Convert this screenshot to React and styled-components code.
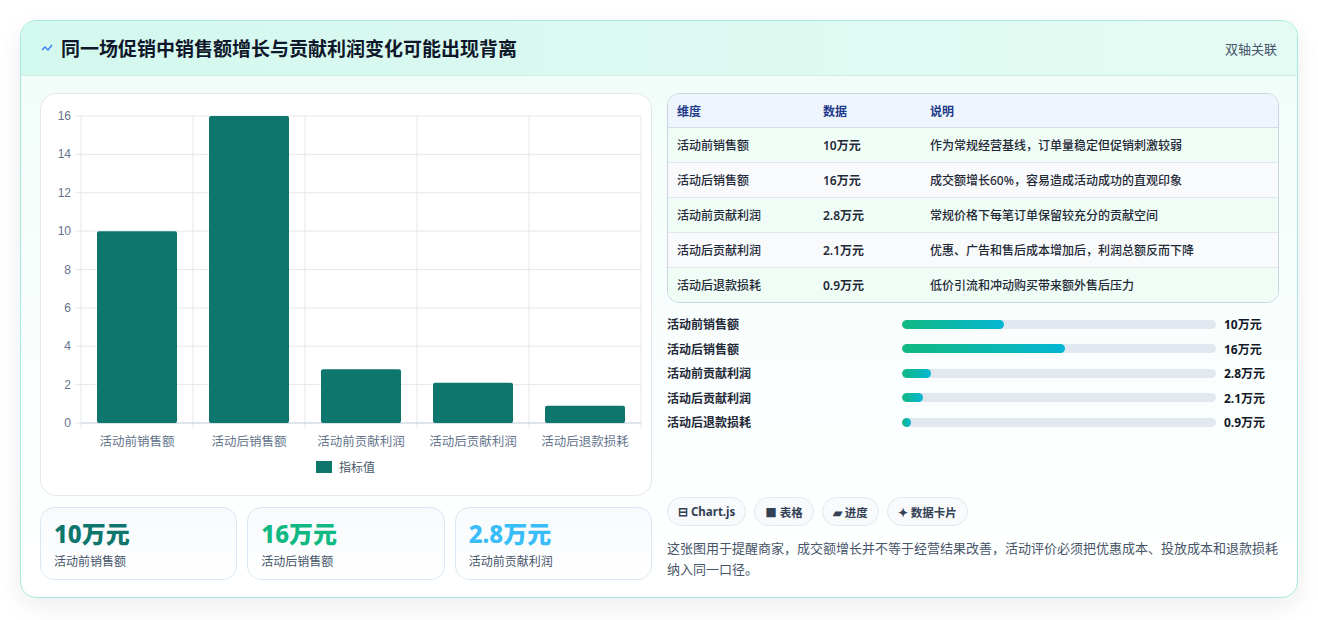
import React from "react";
import styled, { createGlobalStyle } from "styled-components";

const G = createGlobalStyle`
  body{margin:0;background:#fff;font-family:"Noto Sans","Noto Sans CJK SC",sans-serif;}
`;
const Page = styled.div`padding:20px 20px 22px 20px;`;
const Card = styled.div`
  border:1px solid #a7e8e0;border-radius:16px;overflow:hidden;
  background:linear-gradient(180deg,#f0fdf8 0%,#fafefe 60%,#fff 100%);
  box-shadow:0 8px 24px rgba(15,23,42,0.08);
`;
const Header = styled.div`
  height:55px;display:flex;align-items:center;justify-content:space-between;padding:0 20px 0 20px;
  background:linear-gradient(90deg,#d3f8ee,#e4fbf4);border-bottom:1px solid #cdeee6;box-sizing:border-box;
`;
const Title = styled.h1`margin:0;font-size:19px;font-weight:700;color:#0f172a;display:flex;align-items:center;gap:8px;`;
const Tag = styled.span`font-size:13px;color:#475569;`;
const Body = styled.div`display:grid;grid-template-columns:612px 612px;gap:15px;padding:17px 19px 17px 19px;`;
const Col = styled.div`display:flex;flex-direction:column;`;
const ChartBox = styled.div`background:#fff;border:1px solid #e2e8f0;border-radius:16px;height:403px;box-sizing:border-box;`;
const Stats = styled.div`display:grid;grid-template-columns:repeat(3,1fr);gap:10px;margin-top:11px;`;
const Stat = styled.div`height:73px;box-sizing:border-box;border:1px solid #dbe7f3;border-radius:14px;padding:10px 13px;
  background:linear-gradient(180deg,#f7fafd,#fff);`;
const StatV = styled.div`font-size:24px;font-weight:800;color:${p=>p.c};line-height:32px;`;
const StatL = styled.div`font-size:12px;color:#475569;margin-top:2px;`;
const Table = styled.table`width:100%;border-collapse:separate;border-spacing:0;border:1px solid #cbd5e1;border-radius:12px;overflow:hidden;font-size:12px;`;
const Th = styled.th`text-align:left;font-weight:700;color:#1e3a8a;background:#eef5fd;height:33px;padding:0 9px;border-bottom:1px solid #d5dde8;`;
const Td = styled.td`height:34px;padding:0 9px;color:#1f2937;font-weight:${p=>p.b?600:500};border-top:${p=>p.first?"none":"1px solid #e2e8f0"};background:${p=>p.alt?"#f8fafc":"#f0fdf6"};`;
const Prog = styled.div`display:flex;flex-direction:column;gap:8.5px;margin-top:12px;`;
const PRow = styled.div`display:grid;grid-template-columns:227px 314px 1fr;align-items:center;gap:8px;height:16px;font-size:12px;`;
const PLabel = styled.span`color:#1f2937;font-weight:600;`;
const Track = styled.div`height:9px;border-radius:5px;background:#e2e8f0;overflow:hidden;`;
const Fill = styled.div`height:100%;border-radius:5px;background:linear-gradient(90deg,#10b981,#06b6d4);`;
const PVal = styled.span`font-weight:700;color:#111827;`;
const Chips = styled.div`display:flex;gap:8px;margin-top:auto;`;
const Chip = styled.span`height:29px;box-sizing:border-box;border:1px solid #e2e8f0;border-radius:15px;padding:0 10px;display:flex;align-items:center;gap:4px;
  font-size:11.5px;font-weight:700;color:#334155;background:#f8fafc;`;
const Note = styled.p`margin:12px 0 0;font-size:13px;line-height:21px;color:#475569;`;

const cats=["活动前销售额","活动后销售额","活动前贡献利润","活动后贡献利润","活动后退款损耗"];
const vals=[10,16,2.8,2.1,0.9];
const desc=["作为常规经营基线，订单量稳定但促销刺激较弱","成交额增长60%，容易造成活动成功的直观印象","常规价格下每笔订单保留较充分的贡献空间","优惠、广告和售后成本增加后，利润总额反而下降","低价引流和冲动购买带来额外售后压力"];

function Chart(){
  const x0=40,x1=600,y0=22,y1=329,w=(x1-x0)/5,k=(y1-y0)/16;
  return <svg width="610" height="401" style={{display:"block"}}>
    {[0,2,4,6,8,10,12,14,16].map(t=>{const y=y1-t*k;return <g key={t}>
      <line x1={x0} x2={x1} y1={y} y2={y} stroke="#e5e7eb"/>
      <line x1={x0-6} x2={x0} y1={y} y2={y} stroke="#e5e7eb"/>
      <text x={x0-10} y={y+4} fontSize="12" fill="#64748b" textAnchor="end" fontFamily="Liberation Sans">{t}</text></g>})}
    {[0,1,2,3,4,5].map(i=><line key={i} x1={x0+i*w} x2={x0+i*w} y1={y0} y2={y1+6} stroke="#e5e7eb"/>)}
    <line x1={x0} x2={x1} y1={y1} y2={y1} stroke="#cbd5e1"/>
    {vals.map((v,i)=><rect key={i} x={x0+i*w+16} y={y1-v*k} width={80} height={v*k} rx="2" fill="#0f766e"/>)}
    {cats.map((c,i)=><text key={c} x={x0+i*w+w/2} y={352} fontSize="12.5" fill="#64748b" textAnchor="middle">{c}</text>)}
    <rect x="275" y="367" width="16" height="12" fill="#0f766e"/>
    <text x="298" y="378" fontSize="12" fill="#475569">指标值</text>
  </svg>;
}

export default function App(){
  return <Page><G/><Card>
    <Header><Title><svg width="12" height="12" viewBox="0 0 12 12"><path d="M1 8l3-3 3 3 4-5" stroke="#3b82f6" strokeWidth="1.5" fill="none"/></svg>同一场促销中销售额增长与贡献利润变化可能出现背离</Title><Tag>双轴关联</Tag></Header>
    <Body>
      <Col>
        <ChartBox><Chart/></ChartBox>
        <Stats>
          <Stat><StatV c="#0f766e">10万元</StatV><StatL>活动前销售额</StatL></Stat>
          <Stat><StatV c="#10b981">16万元</StatV><StatL>活动后销售额</StatL></Stat>
          <Stat><StatV c="#38bdf8">2.8万元</StatV><StatL>活动前贡献利润</StatL></Stat>
        </Stats>
      </Col>
      <Col>
        <Table><thead><tr><Th style={{width:128}}>维度</Th><Th style={{width:89}}>数据</Th><Th>说明</Th></tr></thead>
          <tbody>{cats.map((c,i)=><tr key={c}>
            <Td first={i===0} alt={i%2===1}>{c}</Td><Td first={i===0} alt={i%2===1} b>{vals[i]}万元</Td><Td first={i===0} alt={i%2===1}>{desc[i]}</Td></tr>)}</tbody>
        </Table>
        <Prog>{cats.map((c,i)=><PRow key={c}><PLabel>{c}</PLabel><Track><Fill style={{width:`${vals[i]/16*52}%`}}/></Track><PVal>{vals[i]}万元</PVal></PRow>)}</Prog>
        <Chips><Chip>⊟ Chart.js</Chip><Chip>■ 表格</Chip><Chip>▰ 进度</Chip><Chip>✦ 数据卡片</Chip></Chips>
        <Note>这张图用于提醒商家，成交额增长并不等于经营结果改善，活动评价必须把优惠成本、投放成本和退款损耗纳入同一口径。</Note>
      </Col>
    </Body>
  </Card></Page>;
}
